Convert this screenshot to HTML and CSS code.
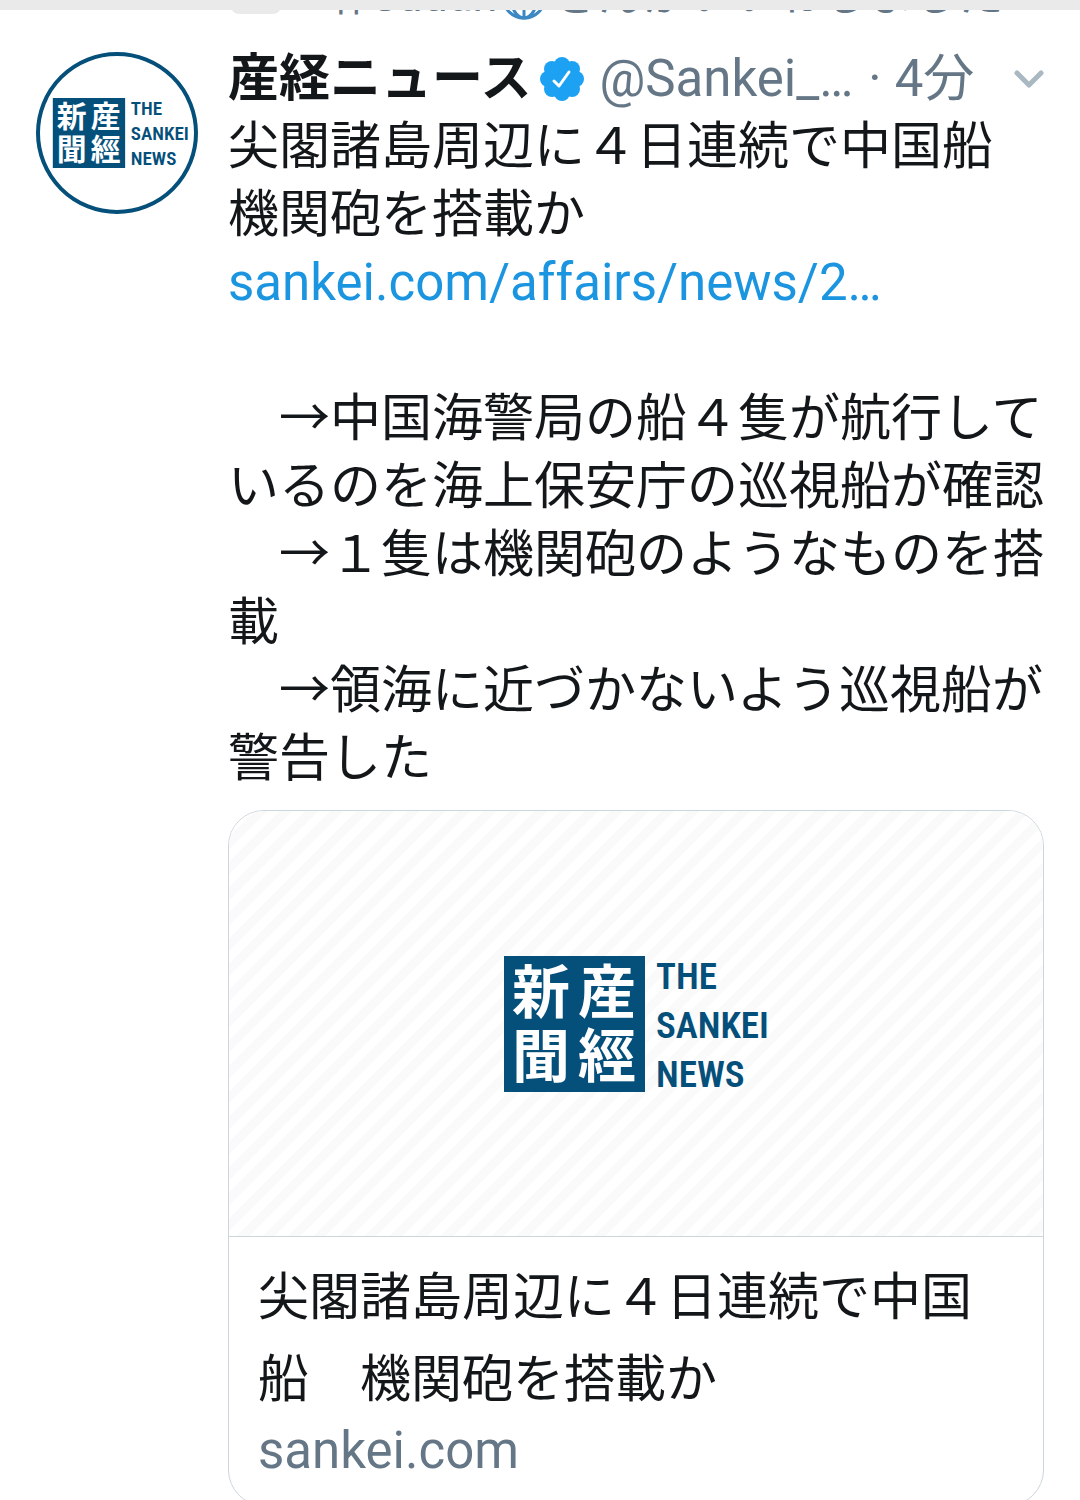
FILE: index.html
```
<!DOCTYPE html>
<html lang="ja">

<head>
    <meta charset="UTF-8">
    <meta name="viewport" content="width=device-width, initial-scale=1.0">
    <title>産経ニュース</title>
    <link rel="stylesheet" href="styles.css">
</head>

<body>
    <!--Sankei logo, shared by the avatar and the card-->
    <svg class="defs" aria-hidden="true">
        <symbol id="logo" viewBox="0 0 264 136">
            <rect width="141" height="136" fill="#05507b" />
            <g class="logo-kanji">
                <text x="8" y="57">新</text>
                <text x="8" y="121">聞</text>
                <text x="74" y="57">産</text>
                <text x="74" y="121">經</text>
            </g>
            <g class="logo-latin">
                <text x="152" y="33">THE</text>
                <text x="152" y="82">SANKEI</text>
                <text x="152" y="131">NEWS</text>
            </g>
        </symbol>
    </svg>

    <!--Line of the timeline that is scrolled under the top bar-->
    <div class="context">
        <span class="context-icon"></span>
        <p class="context-text">一卄Sudan<svg class="globe" viewBox="0 0 46 46" fill="none" stroke="#3b88c3" stroke-width="3">
                <circle cx="23" cy="23" r="21" />
                <ellipse cx="23" cy="23" rx="13" ry="21" />
                <path d="M23 2v42M2 23h42M6 11q17 9 34 0M6 35q17-9 34 0" />
            </svg>さんがいいねしました</p>
    </div>

    <article class="tweet">
        <a class="avatar" href="#" aria-label="産経ニュース">
            <svg class="avatar-logo" viewBox="0 0 264 136"><use href="#logo" /></svg>
        </a>
        <div class="content">
            <header class="tweet-header">
                <strong class="name">産経ニュース</strong>
                <svg class="verified" viewBox="0 0 46 46" role="img" aria-label="認証済み">
                    <g fill="#1da1f2">
                        <circle cx="23" cy="23" r="17" />
                        <circle cx="23" cy="9" r="8" />
                        <circle cx="33" cy="13" r="8" />
                        <circle cx="37" cy="23" r="8" />
                        <circle cx="33" cy="33" r="8" />
                        <circle cx="23" cy="37" r="8" />
                        <circle cx="13" cy="33" r="8" />
                        <circle cx="9" cy="23" r="8" />
                        <circle cx="13" cy="13" r="8" />
                    </g>
                    <path d="M15 25l5 5L30 16" fill="none" stroke="#fff" stroke-width="3" stroke-linecap="round" stroke-linejoin="round" />
                </svg>
                <span class="handle">@Sankei_…</span>
                <span class="dot">·</span>
                <time class="time">4分</time>
                <button class="more" type="button" aria-label="その他">
                    <svg viewBox="0 0 30 18" width="30" height="18" fill="none" stroke="#aab8c2" stroke-width="5" stroke-linecap="round" stroke-linejoin="round">
                        <path d="M3 3l12 12L27 3" />
                    </svg>
                </button>
            </header>

            <p class="text">尖閣諸島周辺に４日連続で中国船　機関砲を搭載か<br><a href="#">sankei.com/affairs/news/2…</a><br><br>　→中国海警局の船４隻が航行しているのを海上保安庁の巡視船が確認<br>　→１隻は機関砲のようなものを搭載<br>　→領海に近づかないよう巡視船が警告した</p>

            <a class="card" href="#">
                <div class="card-image">
                    <svg class="card-logo" viewBox="0 0 264 136"><use href="#logo" /></svg>
                </div>
                <div class="card-body">
                    <p class="card-title">尖閣諸島周辺に４日連続で中国船　機関砲を搭載か</p>
                    <p class="card-domain">sankei.com</p>
                </div>
            </a>
        </div>
    </article>
</body>

</html>
```
FILE: styles.css
```
* {
    margin: 0;
    padding: 0;
    box-sizing: border-box;
}

body {
    border-top: 10px solid #eaeaea;
    background-color: #fff;
    color: #14171a;
    font-family: Roboto, "Noto Sans CJK JP", sans-serif;
    font-size: 51px;
    line-height: 68px;
    overflow: hidden;
}

a {
    color: #1b95e0;
    text-decoration: none;
}

.defs {
    display: block;
    width: 0;
    height: 0;
}

/* Clipped context line */
.context {
    display: flex;
    align-items: flex-end;
    height: 12px;
    padding-left: 231px;
    overflow: hidden;
}

.context-icon {
    flex: none;
    width: 50px;
    height: 50px;
    margin-bottom: 8px;
    border-radius: 8px;
    background-color: #eaeaea;
}

.context-text {
    color: #657786;
    font-size: 45px;
    line-height: 52px;
    white-space: nowrap;
}

.globe {
    width: 46px;
    height: 46px;
    margin: 0 6px 0 4px;
    vertical-align: -9px;
}

/* Tweet */
.tweet {
    display: flex;
    gap: 30px;
    padding: 23px 36px 0;
}

.avatar {
    display: flex;
    flex: none;
    align-items: center;
    justify-content: center;
    width: 162px;
    height: 162px;
    margin-top: 7px;
    padding-left: 6px;
    border: 4px solid #05507b;
    border-radius: 50%;
}

.avatar-logo {
    width: 137px;
    height: 70px;
}

.logo-kanji {
    fill: #fff;
    font-family: "Noto Sans CJK JP", sans-serif;
    font-size: 58px;
    font-weight: 700;
}

.logo-latin {
    fill: #05507b;
    font-family: "Roboto Condensed", Roboto, "Liberation Sans Narrow", sans-serif;
    font-size: 37px;
    font-weight: 600;
}

.content {
    flex: 1;
    min-width: 0;
}

.tweet-header {
    display: flex;
    align-items: center;
    color: #657786;
    white-space: nowrap;
}

.name {
    color: #14171a;
    font-weight: 700;
}

.verified {
    width: 46px;
    height: 46px;
    margin: 0 14px 0 8px;
}

.dot {
    margin: 0 13px 0 15px;
}

.more {
    display: flex;
    margin-left: auto;
    border: none;
    background: none;
    cursor: pointer;
}

.text {
    line-break: anywhere;
}

/* Link card */
.card {
    display: block;
    margin-top: 17px;
    border: 1px solid #ccd6dd;
    border-radius: 36px;
    color: #14171a;
    overflow: hidden;
}

.card-image {
    display: flex;
    align-items: center;
    justify-content: center;
    height: 426px;
    border-bottom: 1px solid #ccd6dd;
    background: repeating-linear-gradient(135deg, #fafafa 0 9px, #fff 9px 18px);
}

.card-logo {
    width: 264px;
    height: 136px;
}

.card-body {
    padding: 20px 29px 24px;
}

.card-title {
    line-height: 82px;
}

.card-domain {
    color: #657786;
    line-height: 60px;
}
```
